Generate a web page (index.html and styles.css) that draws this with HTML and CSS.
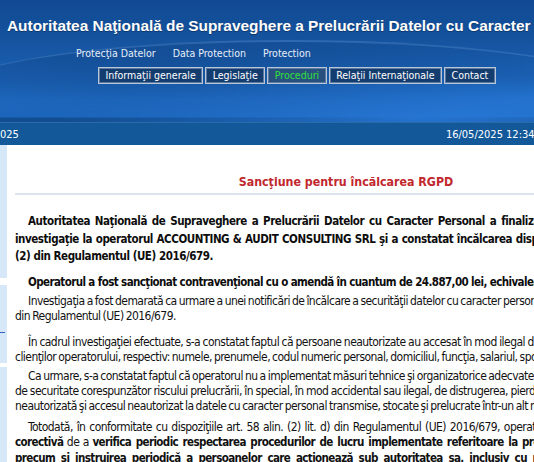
FILE: index.html
```html
<!DOCTYPE html>
<html lang="ro">
<head>
<meta charset="utf-8">
<title>Sancţiune pentru încălcarea RGPD</title>
<link rel="stylesheet" href="styles.css">
</head>
<body>
<div class="page">
  <header class="header">
    <div class="swoosh"></div>
    <h1 class="site-title">Autoritatea Naţională de Supraveghere a Prelucrării Datelor cu Caracter Personal</h1>
    <div class="sublinks">
      <a href="#">Protecţia Datelor</a>
      <a href="#">Data Protection</a>
      <a href="#">Protection</a>
    </div>
    <nav class="nav">
      <a class="btn" href="#">Informaţii generale</a>
      <a class="btn" href="#">Legislaţie</a>
      <a class="btn active" href="#">Proceduri</a>
      <a class="btn" href="#">Relaţii Internaţionale</a>
      <a class="btn" href="#">Contact</a>
    </nav>
  </header>
  <div class="datebar">
    <span class="date-left">025</span>
    <span class="date-right">16/05/2025 12:34</span>
  </div>
  <div class="main">
    <aside class="side">
      <div class="side-box b1"></div>
      <div class="side-box b2"><span class="side-link"></span></div>
      <div class="side-box b3"></div>
    </aside>
    <article class="content">
      <h2 class="art-title">Sancţiune pentru încălcarea RGPD</h2>
      <hr class="rule">
      <p class="lead">
        <span class="ln ind">Autoritatea Naţională de Supraveghere a Prelucrării Datelor cu Caracter Personal a finalizat, în luna aprilie 2025, o</span>
        <span class="ln">investigaţie la operatorul ACCOUNTING &amp; AUDIT CONSULTING SRL şi a constatat încălcarea dispoziţiilor art. 32 alin. (1) şi</span>
        <span class="last">(2) din Regulamentul (UE) 2016/679.</span>
      </p>
      <p class="lead2"><span class="last ind">Operatorul a fost sancţionat contravenţional cu o amendă în cuantum de 24.887,00 lei, echivalentul a 5000 EURO.</span></p>
      <p class="txt p1">
        <span class="ln ind">Investigaţia a fost demarată ca urmare a unei notificări de încălcare a securităţii datelor cu caracter personal transmise de operator în baza art. 33</span>
        <span class="last">din Regulamentul (UE) 2016/679.</span>
      </p>
      <p class="txt p2">
        <span class="ln ind">În cadrul investigaţiei efectuate, s-a constatat faptul că persoane neautorizate au accesat în mod ilegal datele cu caracter personal ale</span>
        <span class="last">clienţilor operatorului, respectiv: numele, prenumele, codul numeric personal, domiciliul, funcţia, salariul, sporurile.</span>
      </p>
      <p class="txt p3">
        <span class="ln ind">Ca urmare, s-a constatat faptul că operatorul nu a implementat măsuri tehnice şi organizatorice adecvate în vederea asigurării unui nivel</span>
        <span class="ln">de securitate corespunzător riscului prelucrării, în special, în mod accidental sau ilegal, de distrugerea, pierderea, modificarea, divulgarea</span>
        <span class="last">neautorizată şi accesul neautorizat la datele cu caracter personal transmise, stocate şi prelucrate într-un alt mod.</span>
      </p>
      <p class="txt p4">
        <span class="ln ind">Totodată, în conformitate cu dispoziţiile art. 58 alin. (2) lit. d) din Regulamentul (UE) 2016/679, operatorului i s-a aplicat şi măsura</span>
        <span class="ln"><b>corectivă</b> de a <b>verifica periodic respectarea procedurilor de lucru implementate referitoare la protecţia datelor cu caracter</b></span>
        <span class="ln"><b>precum şi instruirea periodică a persoanelor care acţionează sub autoritatea sa, inclusiv cu privire la riscurile pe care</b></span>
        <span class="last"><b>le presupune prelucrarea datelor cu caracter personal.</b></span>
      </p>
    </article>
  </div>
</div>
</body>
</html>
```
FILE: styles.css
```css
html, body {
  margin: 0;
  padding: 0;
  overflow: hidden;
  background: #ffffff;
}
.page {
  width: 1000px;
  font-family: "DejaVu Sans Condensed", "DejaVu Sans", sans-serif;
}
.header {
  position: relative;
  height: 122px;
  overflow: hidden;
  background:
    radial-gradient(ellipse 520px 60px at 420px 118px, rgba(40,120,215,0.9), rgba(40,120,215,0) 70%),
    linear-gradient(180deg, #114a93 0px, #15539e 40px, #1b62b6 80px, #1f6dc6 100px, #1d6ac2 117px, #124f94 118px, #134f93 122px);
  display: flex;
  flex-direction: column;
}
.swoosh {
  position: absolute;
  left: -60px;
  top: 40px;
  width: 700px;
  height: 110px;
  border-radius: 50%;
  border-top: 2px solid rgba(120,170,230,0.25);
  background: radial-gradient(ellipse at 30% 20%, rgba(15,60,120,0.35), rgba(15,60,120,0) 60%);
  pointer-events: none;
}
.site-title {
  position: relative;
  margin: 16px 0 0 7px;
  font-family: "Liberation Sans", Arial, sans-serif;
  font-weight: bold;
  font-size: 15.4px;
  line-height: 20px;
  color: #ffffff;
  white-space: nowrap;
  text-shadow: 0 1px 1px rgba(0,0,0,0.35);
}
.sublinks {
  position: relative;
  display: flex;
  gap: 17px;
  margin: 11px 0 0 76px;
  font-size: 10.5px;
  line-height: 13px;
}
.sublinks a {
  color: #e8eef8;
  text-decoration: none;
}
.nav {
  position: relative;
  display: flex;
  gap: 2px;
  margin: 7px 0 0 98px;
}
.btn {
  display: block;
  height: 15px;
  line-height: 15px;
  padding: 0 6.5px;
  font-size: 10.5px;
  color: #ffffff;
  text-decoration: none;
  background: #143d6f;
  border: 1px solid #b9c6d6;
  box-shadow: inset 0 0 0 1px #5a7aa3;
  white-space: nowrap;
}
.btn.active {
  color: #2fe03a;
  background: #28507f;
}
.datebar {
  height: 23px;
  background: #13599a;
  border-top: 1px solid #2a6aa8;
  display: flex;
  align-items: center;
  font-size: 11px;
  color: #ffffff;
  box-sizing: border-box;
}
.date-right {
  margin-left: 427px;
}
.main {
  display: flex;
}
.side {
  width: 7px;
  display: flex;
  flex-direction: column;
  flex: none;
}
.side-box {
  background: #d6e7f8;
}
.b1 { height: 133px; }
.b2 { height: 78px; margin-top: 7px; position: relative; }
.b3 { height: 120px; margin-top: 4px; }
.side-link {
  position: absolute;
  left: 0;
  top: 47px;
  width: 5px;
  height: 1px;
  background: #3060c0;
}
.content {
  width: 662px;
  padding-left: 8px;
  color: #111111;
}
.art-title {
  margin: 29px 0 0;
  text-align: center;
  font-size: 12.3px;
  line-height: 16px;
  font-weight: bold;
  color: #c1272d;
}
.rule {
  margin: 3px 0 0;
  border: 0;
  height: 2px;
  background: #dbe4ee;
}
p {
  margin: 0;
  text-align: justify;
  font-size: 12px;
  letter-spacing: -0.55px;
  word-spacing: -0.8px;
}
.ln {
  display: block;
  text-align-last: justify;
  white-space: nowrap;
}
.last {
  display: block;
  white-space: nowrap;
}
.ind {
  text-indent: 13px;
}
.lead, .lead2 {
  font-weight: bold;
  font-size: 11.5px;
  word-spacing: 0;
  line-height: 17.5px;
  color: #0d0d0d;
}
.lead {
  margin-top: 18px;
  letter-spacing: -0.45px;
}
.lead2 {
  margin-top: 8.5px;
  letter-spacing: -0.6px;
}
.txt {
  line-height: 15.3px;
}
.txt b {
  font-size: 11.5px;
  letter-spacing: -0.6px;
  word-spacing: 0;
}
.txt.p1 { margin-top: 2px; }
.txt.p2 { margin-top: 10.5px; }
.txt.p3 { margin-top: 3.5px; }
.txt.p4 { margin-top: 5.5px; }
```
